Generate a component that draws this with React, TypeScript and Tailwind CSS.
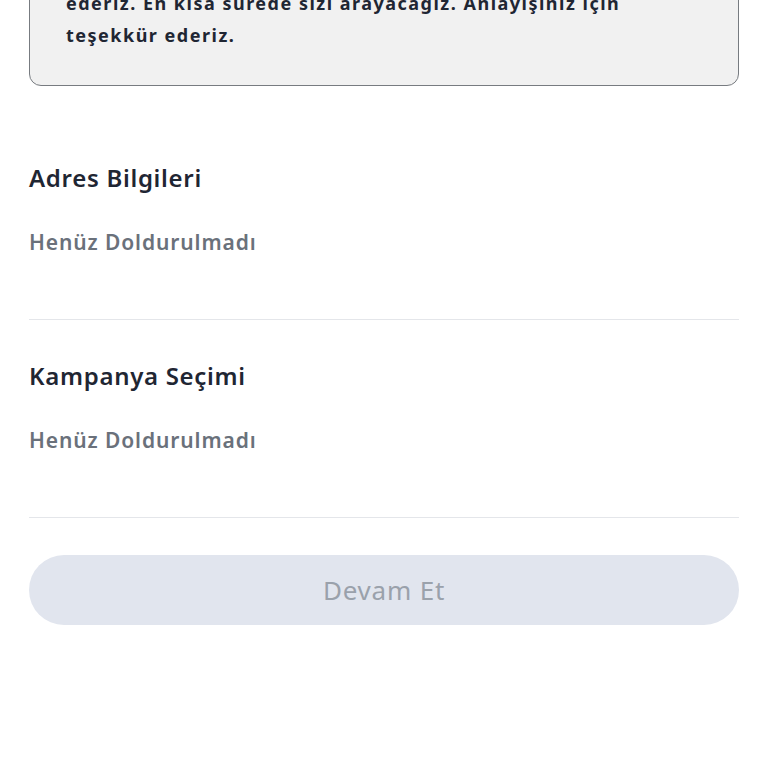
import React from 'react';

const sections = [
  { id: 'address', title: 'Adres Bilgileri', value: 'Henüz Doldurulmadı' },
  { id: 'campaign', title: 'Kampanya Seçimi', value: 'Henüz Doldurulmadı' },
];

const App: React.FC = () => {
  return (
    <div className="min-h-screen bg-white overflow-hidden px-[29px] font-['Noto_Sans',sans-serif] text-[#1f2633]">
      {/* Info box (scrolled, top cut off) */}
      <div className="-mt-[46px] rounded-[12px] border-[1.5px] border-[#777b80] bg-[#f1f1f1] pl-[36px] pr-[30px] pt-[32px] pb-[34px]">
        <p className="text-[18px] leading-[32px] font-bold tracking-[1.5px]">
          <span className="block whitespace-nowrap">ederiz. En kısa sürede sizi arayacağız. Anlayışınız için</span>
          <span className="block whitespace-nowrap">teşekkür ederiz.</span>
        </p>
      </div>

      <div className="mt-[36px]">
        {sections.map((s) => (
          <div key={s.id} className="border-b border-[#e4e6ea] pt-[41px] pb-[63px]">
            <h2 className="text-[24px] leading-[30px] font-semibold tracking-[0.7px]">{s.title}</h2>
            <p className="mt-[35px] text-[21px] leading-[28px] font-semibold tracking-[0.9px] text-[#6a717b]">{s.value}</p>
          </div>
        ))}
      </div>

      <button
        disabled
        className="mt-[37px] w-full h-[70px] rounded-full bg-[#e1e5ee] text-[26px] tracking-[0.8px] text-[#9aa1ab] flex items-center justify-center"
      >
        Devam Et
      </button>
    </div>
  );
};

export default App;
